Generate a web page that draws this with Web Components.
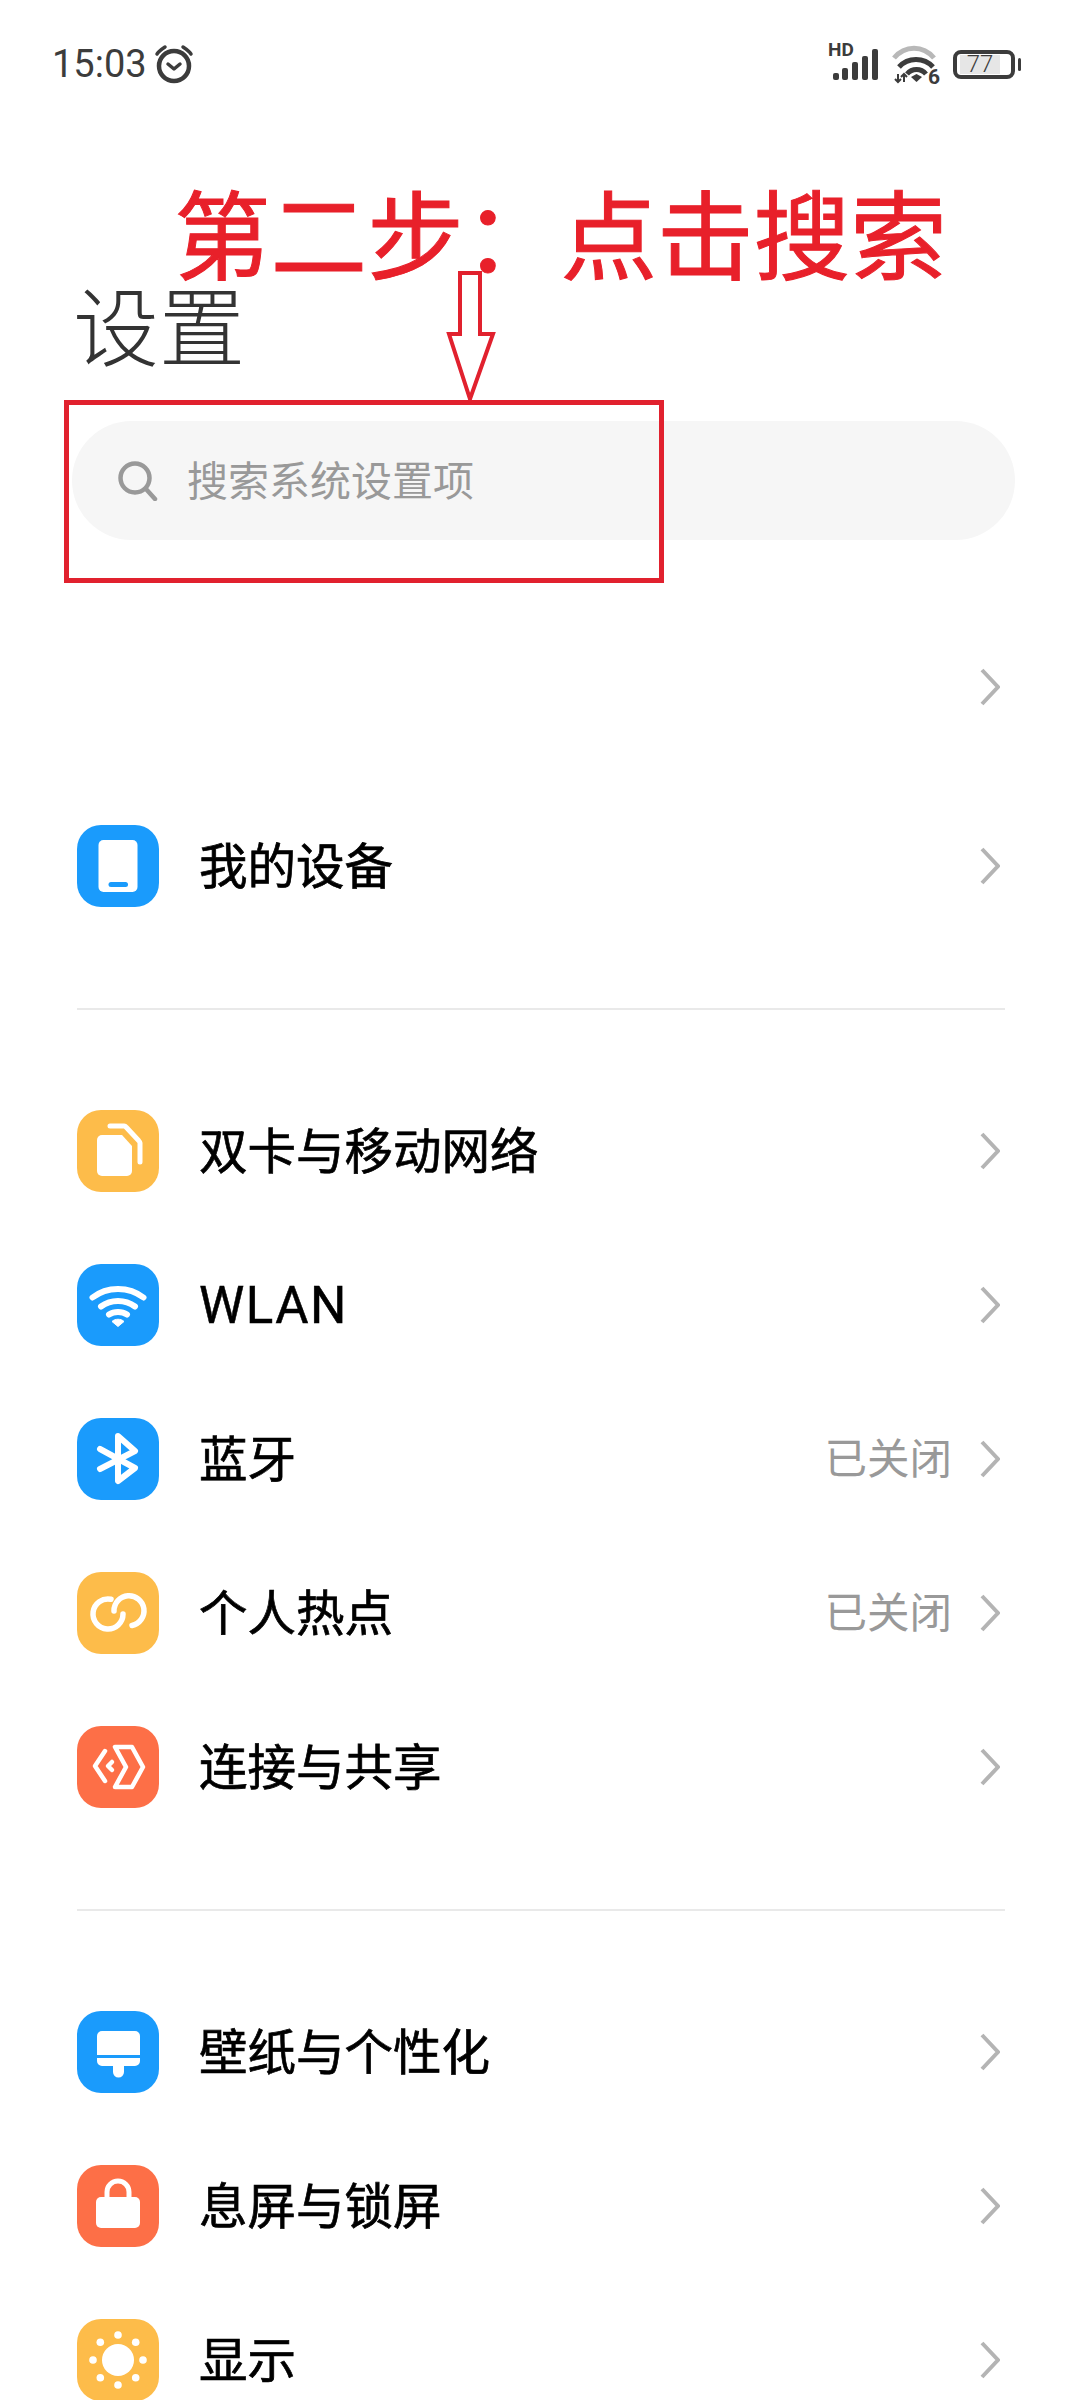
<!DOCTYPE html>
<html lang="zh">
<head>
<meta charset="utf-8">
<title>设置</title>
<style>
    html, body{
        margin:0;
        padding:0;
        background:#fff;
        overflow:hidden;
        font-family:"Noto Sans CJK SC", sans-serif;
    }
</style>
</head>
<body>

<settings-page>
    <status-bar></status-bar>
    <page-title>设置</page-title>
    <search-box>搜索系统设置项</search-box>

    <setting-group first>
        <setting-row></setting-row>
        <setting-row icon="device">我的设备</setting-row>
    </setting-group>

    <setting-group>
        <setting-row icon="sim">双卡与移动网络</setting-row>
        <setting-row icon="wifi" latin>WLAN</setting-row>
        <setting-row icon="bluetooth" value="已关闭">蓝牙</setting-row>
        <setting-row icon="hotspot" value="已关闭">个人热点</setting-row>
        <setting-row icon="share">连接与共享</setting-row>
    </setting-group>

    <setting-group>
        <setting-row icon="brush">壁纸与个性化</setting-row>
        <setting-row icon="lock">息屏与锁屏</setting-row>
        <setting-row icon="sun">显示</setting-row>
    </setting-group>

    <hint-overlay>第二步&#xFF1A;点击搜索</hint-overlay>
</settings-page>

<script>
class SettingsPage extends HTMLElement {
    constructor(){
        super();
        this.attachShadow({mode:'open'});
    }
    connectedCallback(){
        this.shadowRoot.innerHTML = `
        <style>
            :host{
                display:block;
                position:relative;
                width:1080px;
                height:2400px;
                overflow:hidden;
                background:#fff;
                font-family:"Noto Sans CJK SC", sans-serif;
            }
        </style>
        <slot></slot>
        `;
    }
}

class StatusBar extends HTMLElement {
    constructor(){
        super();
        this.attachShadow({mode:'open'});
    }
    connectedCallback(){
        this.shadowRoot.innerHTML = `
        <style>
            :host{
                display:flex;
                justify-content:space-between;
                align-items:center;
                height:128px;
                padding:0 59px 0 52px;
                box-sizing:border-box;
                color:#3c3c3c;
            }
            .left, .right{
                display:flex;
                align-items:center;
            }
            .time{
                font:400 38px/44px Roboto, sans-serif;
                margin-right:3px;
            }
            .signal{
                position:relative;
                width:50px;
                height:34px;
                margin-right:7px;
            }
            .signal b{
                position:absolute;
                left:-3px;
                top:-6px;
                font:700 19px/18px Roboto, sans-serif;
            }
            .wifi{
                position:relative;
                width:56px;
                height:46px;
                margin-right:9px;
            }
            .wifi b{
                position:absolute;
                left:40px;
                top:25px;
                font:700 21px/22px Roboto, sans-serif;
            }
            .battery{
                position:relative;
                width:62px;
                height:29px;
                border:4px solid #3c3c3c;
                border-radius:8px;
                box-sizing:border-box;
                padding:1px 3px;
                display:flex;
            }
            .battery span{
                width:40px;
                background:#e6e6e6;
                text-align:center;
                font:300 24px/19px Roboto, sans-serif;
            }
            .battery::after{
                content:'';
                position:absolute;
                right:-10px;
                top:4px;
                width:3px;
                height:13px;
                border-radius:2px;
                background:#3c3c3c;
            }
            .batwrap{
                margin-right:6px;
                display:flex;
            }
        </style>
        <div class="left">
            <span class="time">15:03</span>
            <svg width="50" height="46" viewBox="0 0 50 46" fill="none" stroke="#3c3c3c" stroke-linecap="round" stroke-linejoin="round">
                <circle cx="24" cy="25" r="15" stroke-width="4.5"/>
                <path d="M18 23l6 5 6-5" stroke-width="3.5"/>
                <path d="M7 13c2-3 5-5 8-7M33 6c3 2 6 4 8 7" stroke-width="3.5"/>
            </svg>
        </div>
        <div class="right">
            <div class="signal">
                <b>HD</b>
                <svg width="50" height="34" viewBox="0 0 50 34" fill="#3c3c3c" style="position:absolute;left:0;top:0">
                    <rect x="2" y="26" width="6" height="7" rx="2"/>
                    <rect x="11" y="21" width="6" height="12" rx="2"/>
                    <rect x="21" y="15" width="6" height="18" rx="2"/>
                    <rect x="31" y="9" width="6" height="24" rx="2"/>
                    <rect x="41" y="2" width="6" height="31" rx="2"/>
                </svg>
            </div>
            <div class="wifi">
                <svg width="56" height="46" viewBox="0 0 56 46" fill="none" stroke-linecap="butt">
                    <path d="M6 17C17 4 35 4 46 17" stroke="#b8b8b8" stroke-width="5"/>
                    <path d="M11 26C20 16 36 16 45 26" stroke="#3c3c3c" stroke-width="5"/>
                    <path d="M19 33C24 27 33 27 38 33" stroke="#3c3c3c" stroke-width="5"/>
                    <path d="M23 36l5.500-3 5.500 3-5.500 5z" fill="#3c3c3c"/>
                    <path d="M10 33v8M7 38l3 3 3-3M16 41v-8M13 36l3-3 3 3" stroke="#3c3c3c" stroke-width="2"/>
                </svg>
                <b>6</b>
            </div>
            <div class="batwrap">
                <div class="battery"><span>77</span></div>
            </div>
        </div>
        `;
    }
}

class PageTitle extends HTMLElement {
    constructor(){
        super();
        this.attachShadow({mode:'open'});
    }
    connectedCallback(){
        this.shadowRoot.innerHTML = `
        <style>
            :host{
                display:block;
                margin:150px 0 53px 73px;
                font-size:86px;
                line-height:90px;
                font-weight:300;
                color:#333;
            }
        </style>
        <slot></slot>
        `;
    }
}

class SearchBox extends HTMLElement {
    constructor(){
        super();
        this.attachShadow({mode:'open'});
    }
    connectedCallback(){
        this.shadowRoot.innerHTML = `
        <style>
            :host{
                display:flex;
                align-items:center;
                gap:29px;
                width:943px;
                height:119px;
                margin-left:72px;
                padding-left:46px;
                box-sizing:border-box;
                border-radius:60px;
                background:#f6f6f6;
                color:#999;
                font-size:41px;
            }
            svg{
                flex:none;
            }
            span{
                padding-bottom:5px;
            }
        </style>
        <svg width="40" height="40" viewBox="0 0 40 40" fill="none" stroke="#999" stroke-width="4.5" stroke-linecap="round">
            <circle cx="17" cy="17" r="14.5"/>
            <path d="M28 28l9 10"/>
        </svg>
        <span><slot></slot></span>
        `;
    }
}

class SettingGroup extends HTMLElement {
    constructor(){
        super();
        this.attachShadow({mode:'open'});
    }
    connectedCallback(){
        this.shadowRoot.innerHTML = `
        <style>
            :host{
                display:block;
                padding:64px 0 65px;
                margin:0 75px 0 77px;
                border-bottom:2px solid #e9e9e9;
            }
            :host([first]){
                padding-top:70px;
            }
            :host(:last-of-type){
                border-bottom:none;
            }
            .rows{
                display:flex;
                flex-direction:column;
            }
        </style>
        <div class="rows"><slot></slot></div>
        `;
        // the blank account row sits a little apart from the rest of its list
        if (this.hasAttribute('first')) {
            this.children[0].style.marginBottom = '25px';
        }
    }
}

const ICONS = {
    device:{bg:'#1a9bfc', svg:`
        <rect x="21.5" y="15" width="39" height="52" rx="5" fill="#fff"/>
        <rect x="31.5" y="57" width="19.5" height="5" rx="2.5" fill="#1a9bfc"/>`},
    sim:{bg:'#fdbc4a', svg:`
        <path d="M25 25h20l10 11v25a5 5 0 0 1-5 5H25a5 5 0 0 1-5-5V30a5 5 0 0 1 5-5z" fill="#fff"/>
        <path d="M33 16h14a3 3 0 0 1 2 1l13 14a3 3 0 0 1 1 2v19" fill="none" stroke="#fff" stroke-width="5" stroke-linecap="round"/>`},
    wifi:{bg:'#1a9bfc', svg:`
        <g fill="none" stroke="#fff" stroke-width="6" stroke-linecap="round">
            <path d="M15.500 33.500C30 22 52 22 66.500 33.500"/>
            <path d="M24 42.500C34 35 48 35 58 42.500"/>
            <path d="M32 50.500C37 47 45 47 50 50.500"/>
        </g>
        <path d="M35 57.500C38 54.500 44 54.500 47 57.500L41 62.500z" fill="#fff" stroke="#fff" stroke-linejoin="round"/>`},
    bluetooth:{bg:'#1a9bfc', svg:`
        <path d="M23 31L58 50 41 63V18L58 33 23 51" fill="none" stroke="#fff" stroke-width="6" stroke-linecap="round" stroke-linejoin="round"/>`},
    hotspot:{bg:'#fdbc4a', svg:`
        <g fill="none" stroke="#fff" stroke-width="5.500" stroke-linecap="round">
            <path d="M34 27.300A15 15 0 1 0 46 42"/>
            <path d="M37 39A15 15 0 1 1 55 53.500"/>
        </g>`},
    share:{bg:'#fd6f47', svg:`
        <g fill="none" stroke="#fff" stroke-linecap="round" stroke-linejoin="round">
            <path d="M28 25L18 40 28 55" stroke-width="4.500"/>
            <path d="M35 36L31 40 35 44" stroke-width="4.500"/>
            <path d="M38 21H55L66 41 55 61H38L49 41z" stroke-width="4.500"/>
        </g>`},
    brush:{bg:'#1a9bfc', svg:`
        <path d="M25 20h33a5 5 0 0 1 5 5v19H20V25a5 5 0 0 1 5-5z" fill="#fff"/>
        <path d="M20 47h43v3a5 5 0 0 1-5 5H47v6a5.500 5.500 0 0 1-11 0v-6H25a5 5 0 0 1-5-5z" fill="#fff"/>`},
    lock:{bg:'#fd6f47', svg:`
        <rect x="19" y="32" width="44" height="31" rx="5" fill="#fff"/>
        <path d="M30 34v-7a11 11 0 0 1 22 0v7" fill="none" stroke="#fff" stroke-width="5"/>`},
    sun:{bg:'#fdbc4a', svg:`
        <circle cx="41" cy="41" r="16" fill="#fff"/>
        <g fill="#fff">
            <circle cx="41" cy="16" r="3.800"/><circle cx="41" cy="66" r="3.800"/>
            <circle cx="16" cy="41" r="3.800"/><circle cx="66" cy="41" r="3.800"/>
            <circle cx="23.300" cy="23.300" r="3.800"/><circle cx="58.700" cy="23.300" r="3.800"/>
            <circle cx="23.300" cy="58.700" r="3.800"/><circle cx="58.700" cy="58.700" r="3.800"/>
        </g>`}
};

class SettingRow extends HTMLElement {
    constructor(){
        super();
        this.attachShadow({mode:'open'});
        this.icon = this.getAttribute('icon');
        this.value = this.getAttribute('value');
    }
    getIcon(){
        if (!this.icon) return '';
        const data = ICONS[this.icon];
        return `<svg class="icon" width="82" height="82" viewBox="0 0 82 82" style="background:${data.bg}">${data.svg}</svg>`;
    }
    connectedCallback(){
        this.shadowRoot.innerHTML = `
        <style>
            :host{
                display:flex;
                align-items:center;
                height:154px;
                color:#000;
                font-size:48.5px;
            }
            .icon{
                flex:none;
                border-radius:24px;
                margin-right:40px;
            }
            .label{
                flex:1;
                padding-bottom:6px;
                -webkit-text-stroke:0.7px #000;
            }
            :host([latin]) .label{
                font-family:Roboto, sans-serif;
                font-size:51px;
                letter-spacing:1.500px;
                padding-bottom:0;
                -webkit-text-stroke:0.5px #000;
            }
            .value{
                color:#999;
                font-size:42.5px;
                padding-bottom:8px;
                margin-right:28px;
            }
            .arrow{
                flex:none;
                margin-right:5px;
            }
        </style>
        ${this.getIcon()}
        <span class="label"><slot></slot></span>
        ${this.value ? `<span class="value">${this.value}</span>` : ''}
        <svg class="arrow" width="20" height="38" viewBox="0 0 20 38" fill="none" stroke="#b4b4b4" stroke-width="4">
            <path d="M2 2L18 19 2 36"/>
        </svg>
        `;
    }
}

class HintOverlay extends HTMLElement {
    constructor(){
        super();
        this.attachShadow({mode:'open'});
    }
    connectedCallback(){
        this.shadowRoot.innerHTML = `
        <style>
            :host{
                display:block;
                position:absolute;
                left:0;
                top:0;
                color:#e8202a;
            }
            .text{
                position:absolute;
                left:174px;
                top:182px;
                white-space:nowrap;
                font-size:96.6px;
                line-height:96px;
                -webkit-text-stroke:1px #e8202a;
            }
            .box{
                position:absolute;
                left:64px;
                top:400px;
                width:600px;
                height:183px;
                box-sizing:border-box;
                border:5px solid #e1212e;
            }
            svg{
                position:absolute;
                left:437px;
                top:265px;
            }
        </style>
        <div class="text"><slot></slot></div>
        <svg width="70" height="140" viewBox="0 0 70 140" fill="none" stroke="#e1212e" stroke-width="4">
            <path d="M23 8H43V69H56L33 134 12 69H23z"/>
        </svg>
        <div class="box"></div>
        `;
    }
}

customElements.define('settings-page', SettingsPage);
customElements.define('status-bar', StatusBar);
customElements.define('page-title', PageTitle);
customElements.define('search-box', SearchBox);
customElements.define('setting-group', SettingGroup);
customElements.define('setting-row', SettingRow);
customElements.define('hint-overlay', HintOverlay);
</script>
</body>
</html>
